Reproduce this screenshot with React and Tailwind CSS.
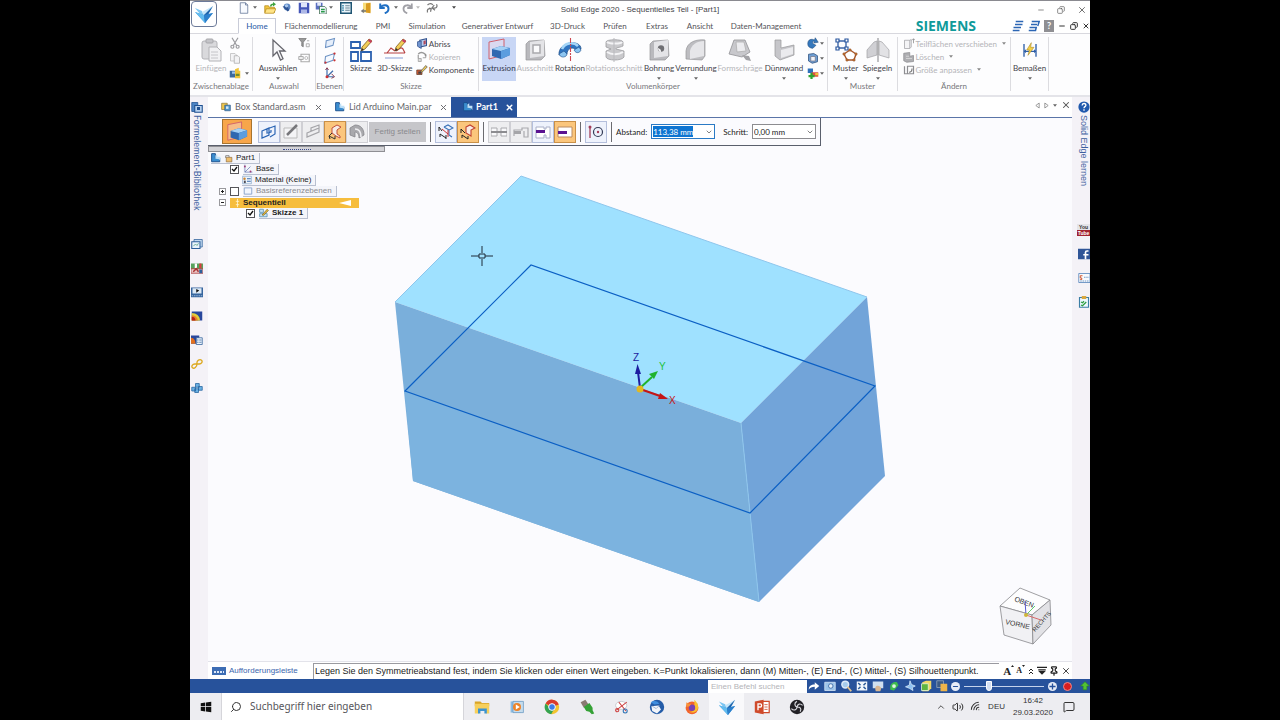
import { useState } from "react";
import { Search, X, Minus, Copy, ChevronDown, ChevronUp, Pin, Wifi, Volume2, MessageSquare } from "lucide-react";

/* ---------- icons ---------- */

function Svg({ box = "0 0 16 16", className = "w-3 h-3", children }) {
  return (
    <svg viewBox={box} className={`${className} shrink-0`} fill="none" aria-hidden="true">
      {children}
    </svg>
  );
}

function Caret({ color = "#666" }) {
  return (
    <Svg box="0 0 6 4" className="w-1 h-[3px]">
      <path d="M0 0h6L3 4z" fill={color} />
    </Svg>
  );
}

function SolidEdgeLogo({ className }) {
  return (
    <Svg box="0 0 20 20" className={className}>
      <path d="M1 4l7 3 2 5-4-2z" fill="#7cc6f2" />
      <path d="M8 8l11-6-3 6-6 4z" fill="#c4e5f8" />
      <path d="M1 8l9 3 9-2-8 10z" fill="#3f97dc" />
      <path d="M10 11l9-9-4 7-4 10z" fill="#1b62ab" />
      <path d="M1 8l9 3 1 8z" fill="#62bcef" />
      <path d="M10 11l9-2-8 10z" fill="#2c80cc" />
    </Svg>
  );
}

const NewDoc = () => (
  <Svg><path d="M3 1h7l3 3v11H3z" fill="#f7faff" stroke="#5b6f93" /><path d="M10 1v3h3" stroke="#5b6f93" /></Svg>
);
const OpenDoc = () => (
  <Svg>
    <path d="M1 5h5l1 2h7v7H1z" fill="#f3c63e" stroke="#b78b1c" />
    <path d="M3 9h13l-3 6H1z" fill="#ffe487" stroke="#b78b1c" />
    <path d="M8 6c0-3 2-4 4-4V0l4 3-4 3V4c-1 0-2 1-2 2z" fill="#3fa33f" />
  </Svg>
);
const Ball = () => (
  <Svg className="w-[9px] h-[9px]"><circle cx="9" cy="7" r="6" fill="#5b86c4" /><path d="M1 6l8-1 4 8-3 2z" fill="#2c5293" /><circle cx="8" cy="5" r="3" fill="#a9c8ee" /></Svg>
);
const Save = () => (
  <Svg><path d="M1 1h13l1 1v13H1z" fill="#4556b8" /><path d="M4 1h8v6H4z" fill="#dfe5fa" /><path d="M4 10h8v5H4z" fill="#aeb8e6" /></Svg>
);
const SaveAll = () => (
  <Svg>
    <path d="M1 1h9v9H1z" fill="#5a6fc0" /><path d="M3 1h5v4H3z" fill="#e5eafb" />
    <path d="M6 6h7l2 2v8H6z" fill="#f4f8ff" stroke="#3d6b4d" /><path d="M8 10h5M8 13h5" stroke="#2a9a49" strokeWidth="2" />
  </Svg>
);
const ListIcon = () => (
  <Svg>
    <path d="M1 1h14v14H1z" fill="#eaf5fb" stroke="#1f5573" strokeWidth="2" />
    <path d="M3 5h2M3 8h2M3 11h2" stroke="#2b7fa3" strokeWidth="2" /><path d="M7 5h6M7 8h6M7 11h6" stroke="#3b5d70" />
  </Svg>
);
const Door = () => (
  <Svg><path d="M4 1h10v13H4z" fill="#f8dd7a" /><path d="M8 2l6-1v14l-6-1z" fill="#d99b20" /><path d="M1 12l4-3v2h3v2H5v2z" fill="#777" /></Svg>
);
const Undo = ({ color = "#1f6fc4" }) => (
  <Svg><path d="M3 2v6h6" stroke={color} strokeWidth="2.6" /><path d="M3 8c3-5 11-5 11 1 0 3-2 5-5 6" stroke={color} strokeWidth="2.6" /></Svg>
);
const Redo = () => (
  <Svg><path d="M13 2v6H7" stroke="#a0a0a6" strokeWidth="2.4" /><path d="M13 8C10 3 2 3 2 9c0 3 2 5 5 6" stroke="#a0a0a6" strokeWidth="2.4" /></Svg>
);
const Pieces = () => (
  <Svg>
    <path d="M14 3c2 4-1 6-5 5M11 4L8 8l4 3" stroke="#777" strokeWidth="1.6" />
    <path d="M2 4c3-3 6-2 7 0M2 14c-1-4 1-6 5-5M4 8l3 1-1 4" stroke="#777" strokeWidth="1.6" />
  </Svg>
);

const Paste = () => (
  <Svg box="0 0 24 24" className="w-6 h-6">
    <rect x="3" y="3" width="15" height="18" rx="2" fill="#d9d9dc" stroke="#b2b2b6" />
    <rect x="7" y="1" width="7" height="4" rx="1" fill="#c4c4c8" stroke="#a7a7ab" />
    <path d="M10 9h8l4 4v10H10z" fill="#f1f1f3" stroke="#b2b2b6" />
    <path d="M12 14h7M12 17h7M12 20h7" stroke="#c4c4c8" />
  </Svg>
);
const Cut = () => (
  <Svg><path d="M4 1l6 10M12 1L6 11" stroke="#9a9a9e" strokeWidth="1.6" /><circle cx="4.500" cy="13" r="2" stroke="#9a9a9e" strokeWidth="1.6" /><circle cx="11.500" cy="13" r="2" stroke="#9a9a9e" strokeWidth="1.6" /></Svg>
);
const CopyPages = () => (
  <Svg><path d="M2 2h6l2 2v8H2z" fill="#f3f3f5" stroke="#bbb" /><path d="M7 5h5l2 2v8H7z" fill="#f3f3f5" stroke="#aaa" /></Svg>
);
const Palette = () => (
  <Svg><path d="M1 5h9v9H1z" fill="#3c6a9e" /><path d="M4 6h4v3H4z" fill="#9fc3e8" /><path d="M8 3l5-2v4h2v10H8z" fill="#f0c437" /><path d="M9 9h5v3H9z" fill="#6f8c2f" /></Svg>
);
const Cursor = () => (
  <Svg box="0 0 24 24" className="w-6 h-6"><path d="M7 2v16l4-4 3.500 8 2.500-1.200L13.500 13H19z" fill="#f8f8fa" stroke="#66666d" strokeWidth="1.300" /></Svg>
);
const Filter = () => (
  <Svg><path d="M1 2h10L7 7v6l-2-1V7z" fill="#999" stroke="#777" /><path d="M12 5h3M11 9h4v4h-4z" stroke="#999" /></Svg>
);
const SelectBox = () => (
  <Svg><path d="M4 3h11v10H4z" stroke="#aaa" strokeWidth="1.500" /><path d="M1 6h6v4H1z" fill="#eee" stroke="#999" /><circle cx="11" cy="8" r="2" stroke="#aaa" /></Svg>
);
const PlaneA = () => (
  <Svg><path d="M3 5l11-3-2 9-10 3z" fill="#e6effb" stroke="#6d93c4" strokeWidth="1.400" /></Svg>
);
const PlaneB = () => (
  <Svg><path d="M2 6l12-4-2 9-11 4z" fill="#f7faff" stroke="#6d93c4" strokeWidth="1.400" /><circle cx="14" cy="2" r="1.500" fill="#c33" /><circle cx="14" cy="11" r="1.500" fill="#c33" /><circle cx="2" cy="14" r="1.500" fill="#c33" /></Svg>
);
const Axes = () => (
  <Svg><path d="M4 2v11h9M4 13l8-8" stroke="#3f6fae" strokeWidth="1.600" /><circle cx="4" cy="13" r="2" fill="#c33" /><path d="M10 9l4 4-4 2M2 4l2-3 2 3" stroke="#8a3c50" strokeWidth="1.300" /></Svg>
);
const Pencil = () => (
  <g>
    <path d="M12 13l1-4 7-8 3 2-7 8z" fill="#f2cd57" stroke="#7c5a1c" strokeWidth=".8" />
    <path d="M20 1l3 2-1 2-3-2z" fill="#c83c62" /><path d="M12 13l1-3 2 2z" fill="#333" />
  </g>
);
const Sketch = () => (
  <Svg box="0 0 24 24" className="w-6 h-6">
    <path d="M2 4h9v6H2zM2 14h7v9H2zM12 14h10v9H12z" fill="#fff" stroke="#2c61b0" strokeWidth="1.800" /><Pencil />
  </Svg>
);
const Sketch3d = () => (
  <Svg box="0 0 24 24" className="w-6 h-6">
    <path d="M2 20h18" stroke="#a8b8e0" strokeWidth="1.400" />
    <path d="M1 15h21M4 15l4-5 4 3M13 13c4-3 5-4 7-2l2 4" stroke="#b84040" strokeWidth="1.200" /><Pencil />
  </Svg>
);
const Tear = () => (
  <Svg><path d="M5 3l9-2v9l-9 2z" fill="#b6cdf0" stroke="#35548f" strokeWidth="1.400" /><path d="M2 5l5-1v10l-5-3z" fill="#6f94cf" stroke="#35548f" /><path d="M10 4l3-1v5l-3 1z" fill="#b04a5c" /></Svg>
);
const CopyGray = () => (
  <Svg><path d="M3 4c4-4 10-1 10 3" stroke="#999" strokeWidth="2" /><path d="M13 4v5H9" stroke="#888" /><path d="M3 5v5h4v4H3z" fill="#ddd" stroke="#999" /></Svg>
);
const Component = () => (
  <Svg><path d="M1 8h7v6H1z" fill="#d55a36" stroke="#61402e" /><path d="M6 10l7-8 2 2-7 7z" fill="#f2cd57" stroke="#555" /><path d="M3 10h4v3H3z" fill="#444" /></Svg>
);

const Extrude = ({ className = "w-6 h-6" }) => (
  <Svg box="0 0 24 24" className={className}>
    <path d="M2 4l15-3v16L2 21z" fill="#f4dfe6" fillOpacity=".4" stroke="#d0606c" strokeWidth="1" />
    <path d="M5 11l9-3 9 2v7l-9 4-9-3z" fill="#2f68b0" /><path d="M5 11l9-3 9 2-9 3z" fill="#a4d1f6" />
    <path d="M14 13l9-3v7l-9 4z" fill="#5b9ddf" />
  </Svg>
);
const BlockShell = ({ children }) => (
  <Svg box="0 0 24 24" className="w-6 h-6">
    <path d="M3 6l3-3 15-1 1 16-4 4H3z" fill="#b9b9bd" stroke="#96969a" strokeWidth=".7" />
    <path d="M7 4l14-2v16l-14 2z" fill="#e4e4e7" />
    {children}
  </Svg>
);
const Cutout = () => <BlockShell><path d="M10 7h7v8h-7z" fill="#fbfbfc" stroke="#a9a9ad" strokeWidth="1.500" /></BlockShell>;
const Hole = () => <BlockShell><circle cx="14" cy="10.500" r="3.200" fill="#6f6f73" /><path d="M11 10c2 1 3 1 3 4-2 0-3-2-3-4z" fill="#f4f4f6" /></BlockShell>;
const Revolve = () => (
  <Svg box="0 0 24 24" className="w-6 h-6">
    <path d="M1 17C0 3 23 1 23 11l-5 3c0-6-9-5-9 2z" fill="#2f74c0" stroke="#1d4f8c" strokeWidth=".8" />
    <path d="M4 11C7 4 16 4 20 8" stroke="#a4d5f7" strokeWidth="2.600" /><path d="M1 16l5-3 3 3c0 3-6 5-8 0zM16 12l5-3 2 3c-1 3-5 4-7 0z" fill="#8cc5f1" stroke="#1d4f8c" strokeWidth=".6" />
    <path d="M12.500 0v24" stroke="#cf4650" strokeWidth="1.100" strokeDasharray="5 1 2 1" />
  </Svg>
);
const RevolveCut = () => (
  <Svg box="0 0 24 24" className="w-6 h-6">
    <path d="M4 4c0-3 17-3 17 0v4c-4 2-7 1-7 3l8 2v6c-2 4-17 4-18 0v-6l5-2-5-2z" fill="#c9c9cc" stroke="#9c9ca0" strokeWidth=".8" />
    <path d="M5 4c2 2 14 2 15 0M5 14c4 3 12 3 16 0" stroke="#f4f4f6" strokeWidth="2" /><path d="M12 0v24" stroke="#b9b9bd" />
  </Svg>
);
const Round = () => (
  <Svg box="0 0 24 24" className="w-6 h-6">
    <path d="M2 21V13C3 4 12 1 21 2v16l-3 4z" fill="#bdbdc1" stroke="#96969a" strokeWidth=".7" /><path d="M6 21v-8c1-6 7-10 14-10v15z" fill="#e6e6e9" />
  </Svg>
);
const Draft = () => (
  <Svg box="0 0 24 24" className="w-6 h-6">
    <path d="M6 2h11l5 12-8 5-13-3z" fill="#c8c8cc" stroke="#929296" strokeWidth=".8" /><path d="M8 4h8l2 9-9 1z" fill="#ececef" stroke="#aaa" strokeWidth=".7" />
    <path d="M14 17l7 1 2 5-5-1z" fill="#a3a3a7" />
  </Svg>
);
const ThinWall = () => (
  <Svg box="0 0 24 24" className="w-6 h-6">
    <path d="M3 2h6v8l13-3v10L8 22l-5-4z" fill="#c6c6ca" stroke="#96969a" strokeWidth=".7" /><path d="M9 12l12-3v7L9 20z" fill="#ebebee" />
  </Svg>
);
const MiniSweep = () => <Svg><path d="M1 9c0-6 5-7 9-5l1-3 4 6-6 1 1-2c-2-1-3 0-2 3l4 2-4 4c-4 0-7-2-7-6z" fill="#3578bd" stroke="#1e4978" strokeWidth=".7" /></Svg>;
const MiniHelix = () => <Svg><path d="M2 3l7-1 5 3v8l-7 2-5-3z" fill="#6f9fd4" stroke="#2c4f7c" /><path d="M5 6h6v6H5z" fill="#f3f5fa" stroke="#778" /></Svg>;
const MiniAdd = () => <Svg><path d="M1 2h7v6H1z" fill="#2f71bb" /><path d="M6 7h9v6H6z" fill="#d9543e" /><path d="M6 8v8M2 12h8" stroke="#2da331" strokeWidth="3" /><path d="M11 8h4v3h-4z" fill="#f1c23c" /></Svg>;
const Pattern = () => (
  <Svg box="0 0 24 24" className="w-6 h-6">
    <path d="M4 3h8v7H4z" stroke="#3d66a8" strokeWidth="1.400" />
    <path d="M2 1h3v3H2zM11 1h3v3h-3zM2 9h3v3H2zM11 9h3v3h-3z" fill="#fff" stroke="#2a579e" strokeWidth="1.200" />
    <path d="M16 12l6 4-2 6h-7l-3-6z" fill="#fff" stroke="#a8572b" strokeWidth="1.400" />
    <path d="M15 11h2v2h-2zM21 15h2v2h-2zM19 21h2v2h-2zM12 21h2v2h-2zM9 15h2v2H9z" fill="#d7853c" stroke="#8f4a20" strokeWidth=".6" />
  </Svg>
);
const Mirror = () => (
  <Svg box="0 0 24 24" className="w-6 h-6">
    <path d="M1 20v-8l7-8 3-1v14z" fill="#d0d0d4" stroke="#a1a1a5" strokeWidth=".7" /><path d="M23 20v-8l-7-8-3-1v14z" fill="#e2e2e5" stroke="#a1a1a5" strokeWidth=".7" />
    <path d="M12 0v24" stroke="#8c8c90" strokeWidth="1.100" />
  </Svg>
);
const MoveFace = () => <Svg><path d="M2 3h7v11H2zM9 3l2-1v10l-2 2" fill="#f4f4f6" stroke="#a2a2a6" /><path d="M14 7V1M12 3l2-2 2 2" stroke="#888" /></Svg>;
const DeleteFace = () => <Svg><path d="M1 3l8-1v5l5-1v8l-9 1-4-2z" fill="#aeaeb2" stroke="#8d8d91" /><path d="M4 7h4M4 10h8" stroke="#ddd" /></Svg>;
const ResizeFace = () => <Svg><path d="M2 3v10h4M6 3h8v10H6z" stroke="#8d8d91" strokeWidth="1.600" /><path d="M8 11c3 0 4-2 4-5" stroke="#777" strokeWidth="1.500" /></Svg>;
const Dimension = () => (
  <Svg box="0 0 24 24" className="w-4 h-4">
    <path d="M3 3v19M21 3v19M3 14h18" stroke="#2d5ea8" strokeWidth="2" /><path d="M6 11l-3 3 3 3M18 11l3 3-3 3" fill="#2d5ea8" /><path d="M14 1L7 12h4l-2 8 9-12h-5z" fill="#f3cf47" stroke="#a3831d" strokeWidth=".8" />
  </Svg>
);

const PartIcon = () => <Svg className="w-[10px] h-[10px]"><path d="M1 1h6v7h7v6H1z" fill="#3b8ed0" stroke="#1b4f8e" strokeWidth="1.500" /><path d="M7 4l3-2v4h5v7l-2-3-6-1z" fill="#bde0f8" /></Svg>;
const AsmIcon = () => <Svg className="w-[10px] h-[10px]"><path d="M1 2h9v10H1z" fill="#efc64b" stroke="#7d692c" /><path d="M6 5h9v9H6z" fill="#4e93c9" stroke="#2b5584" /><path d="M8 7h4v4H8z" fill="#d3e8f7" /></Svg>;

/* command bar */
const Frames = () => <Svg className="w-4 h-4"><path d="M1 7l7-3v7l-7 3zM6 5l8-3v8l-5 3M6 5v4l4-1V6" stroke="#2a64b4" strokeWidth="1.200" /></Svg>;
const DrawLine = () => <Svg className="w-4 h-4"><path d="M1 4h13v10H1z" fill="#f4f4f6" stroke="#bbb" /><path d="M4 11L14 1" stroke="#77777b" strokeWidth="2.500" /></Svg>;
const Steps = () => <Svg className="w-4 h-4"><path d="M2 9l12-5v4L2 13zM6 7V4l8-3v3" stroke="#a5a5a9" strokeWidth="1.200" /></Svg>;
const Symmetric = () => <Svg className="w-4 h-4"><path d="M5 4l5-3 4 2-4 3v4l3 2v2l-4-2-4-3z" fill="#f8ebe4" stroke="#c0503f" /><path d="M2 12l6 3M5 9l-3 3 1 3M8 12v3" stroke="#333" /></Svg>;
const HalfTube = () => <Svg className="w-4 h-4"><path d="M1 4l5-3c6 0 9 4 9 10l-5 3c0-4-2-6-4-6v5l-5-2z" fill="#a9a9ad" stroke="#85858a" strokeWidth=".8" /><path d="M6 5c5 0 6 4 6 8" stroke="#ededf0" strokeWidth="1.600" /></Svg>;
const SideA = () => <Svg className="w-4 h-4"><path d="M6 3l4-2 5 3-4 2v5l3 2M6 3l5 3" stroke="#3b73b8" strokeWidth="1.100" /><path d="M10 6v7M4 5l6 5" stroke="#c33" /><path d="M1 3l3 4M1 3v4M2 10l6 4M8 11v4M2 10v3" stroke="#222" /></Svg>;
const SideB = () => <Svg className="w-4 h-4"><path d="M6 3l4-2 5 3-4 2v6l-5-3z" fill="#f8ebe4" stroke="#c0402f" strokeWidth="1.100" /><path d="M1 5l4 4M1 5v4M2 11l6 4M8 12v3M2 11v3" stroke="#222" /></Svg>;
const SlotA = () => <Svg className="w-4 h-4"><path d="M0 4h6v8H0zM10 4h6v8h-6z" fill="#f9f9fb" stroke="#aaaaae" /><path d="M0 7h16v2H0z" fill="#8c8c90" /></Svg>;
const SlotB = () => <Svg className="w-4 h-4"><path d="M1 12V6h8V4h6v9h-4V7" stroke="#aaaaae" strokeWidth="1.200" /><path d="M1 7h7v3H1z" fill="#a5a5a9" /></Svg>;
const SlotC = () => <Svg className="w-4 h-4"><path d="M1 3h8v2h2V3h4v11h-4v-3H9v3H1z" fill="#fff" stroke="#aab0c8" /><path d="M1 6h9v3H1z" fill="#5b1391" /></Svg>;
const SlotD = () => <Svg className="w-4 h-4"><path d="M1 3h14v10H1z" fill="#fff" stroke="#bb8c62" /><path d="M1 7h9v3H1z" fill="#5b1391" /></Svg>;
const PointTarget = () => <Svg className="w-4 h-4"><path d="M2 4v10" stroke="#a33c58" strokeWidth="1.300" /><circle cx="2" cy="3" r="1.500" fill="#a33c58" /><circle cx="10" cy="8" r="4.500" stroke="#333a55" strokeWidth="1.200" /><circle cx="10" cy="8" r="1.200" fill="#a33c58" /></Svg>;

/* side panels */
const Gallery = () => <Svg><path d="M4 2h11v10H4z" fill="#c3daf0" stroke="#2d5f9a" /><path d="M1 5h11v9H1z" fill="#e9f3fb" stroke="#2d5f9a" strokeWidth="1.400" /><path d="M3 11l3-3 2 2 2-3" stroke="#4a9a7b" /></Svg>;
const Parts = () => <Svg><path d="M0 2h16v8H0z" fill="#58a25c" /><path d="M5 2h3v6H5z" fill="#fff" /><path d="M11 2h3v6h-3z" fill="#d83d3d" /><path d="M0 9h16v6H0z" fill="#ecc9c9" stroke="#a33" /><path d="M3 13l4-4 3 4" stroke="#a33" strokeWidth="2" /><path d="M11 10h4v5h-4z" fill="#2d5f9a" /></Svg>;
const Player = () => <Svg><path d="M0 2h16v13H0z" fill="#36659e" /><path d="M2 3h12v7H2z" fill="#dce9f5" /><path d="M7 4l4 2-4 3z" fill="#111" /><path d="M1 13h14" stroke="#b5cdea" strokeDasharray="2 1" /></Svg>;
const Heat = () => <Svg><path d="M1 2h14v12H1z" fill="#28479c" /><path d="M1 4c6 0 11 4 11 10H1z" fill="#e2cf3b" /><path d="M1 7c4 0 8 3 8 7H1z" fill="#e8842a" /><path d="M1 9c3 0 5 2 5 5H1z" fill="#b5201a" /></Svg>;
const HeatTable = () => <Svg><path d="M0 2h11v11H0z" fill="#28479c" /><path d="M0 5c4 0 6 4 6 8H0z" fill="#e2701f" /><path d="M7 5h8v9H7z" fill="#eef4fc" stroke="#2d5f9a" /><path d="M8 8h2M8 11h2M11 8h3M11 11h3" stroke="#36659e" /></Svg>;
const Chain = () => <Svg><path d="M8 8c-1-5 4-7 6-5s0 5-3 5H5c-3 0-5 3-3 5s6-1 6-5z" stroke="#dda91f" strokeWidth="1.700" /></Svg>;
const Cubes = () => <Svg><path d="M6 2h5v5H6zM1 7h5v5H1zM10 6h5v5h-5zM5 9h5v5H5z" fill="#69b0e2" stroke="#23639f" /></Svg>;
const LibraryIcon = () => <Svg><path d="M1 2h8v12H1z" fill="#4c84c4" stroke="#1e4f90" /><path d="M5 6h10v9H5z" fill="#b7d1ef" stroke="#1e4f90" strokeWidth="1.400" /><path d="M8 8h4v4H8z" fill="#1e4f90" /></Svg>;
const Help = () => <Svg><circle cx="8" cy="8" r="7.500" fill="#1f58ad" /><path d="M5.500 6c0-3.500 5-3.500 5-.5 0 2-2.500 2-2.500 4M8 11v2" stroke="#fff" strokeWidth="1.800" /></Svg>;
const YouTube = () => (
  <span className="w-[13px] flex flex-col text-center text-[5px] leading-[6px] font-bold">
    <span className="text-[#333] bg-[#e4e4e8]">You</span>
    <span className="bg-[#a2222f] text-white">Tube</span>
  </span>
);
const Facebook = () => <Svg><path d="M0 1h16v14H0z" fill="#2f5597" /><path d="M14 4h-2c-2 0-2 1-2 2v9M7 9h7" stroke="#fff" strokeWidth="2.200" /></Svg>;
const Card = () => <Svg><path d="M1 2h15v12H1z" fill="#f8fafd" stroke="#4a7bb5" /><path d="M6 5H3v3h2v2H3" stroke="#d0532c" strokeWidth="1.300" /><path d="M8 7h7M3 12h12" stroke="#4a7bb5" strokeDasharray="2 1" /></Svg>;
const Clipboard = () => <Svg><path d="M2 2h12v13H2z" fill="#eef8ff" stroke="#3b7ea5" strokeWidth="1.500" /><path d="M5 0h6v4H5z" fill="#d9a840" /><path d="M4 8l2 1 2-2M4 12l2 1 5-5" stroke="#2c9d40" strokeWidth="1.700" /></Svg>;

/* ---------- building blocks ---------- */

function Group({ label, className, children }) {
  return (
    <section className={`${className} shrink-0 flex flex-col border-r border-[#dcdce0]`}>
      <div className="flex h-[45px] justify-center">{children}</div>
      <h2 className="text-center text-[8px] leading-[10px] text-[#77777b] whitespace-nowrap">{label}</h2>
    </section>
  );
}

function BigButton({ icon, label, width, off, on, caret }) {
  return (
    <button
      disabled={off}
      className={`${width} shrink-0 h-11 flex flex-col items-center text-[8px] leading-[10px] whitespace-nowrap ${
        on ? "bg-[#c8d6f5] text-[#33364a]" : off ? "text-[#b4b4b8]" : "text-[#44444a]"
      }`}
    >
      <span className="h-[26px] flex items-center">{icon}</span>
      <span>{label}</span>
      {caret && <span className="mt-1"><Caret /></span>}
    </button>
  );
}

function TextButton({ icon, label, off, caret }) {
  return (
    <button disabled={off} className={`flex items-center gap-px h-[13px] text-[8px] whitespace-nowrap ${off ? "text-[#b4b4b8]" : "text-[#44444a]"}`}>
      {icon}
      {label}
      {caret && <span className="ml-1"><Caret color="#888" /></span>}
    </button>
  );
}

function IconButton({ label, className = "", children }) {
  return (
    <button aria-label={label} className={`flex items-center justify-center ${className}`}>
      {children}
    </button>
  );
}

function BarButton({ label, tone = "plain", children }) {
  const tones = {
    plain: "bg-[#eeeef0] border-[#cfcfd4]",
    blue: "bg-[#eef2fc] border-[#b4bfdc]",
    hot: "bg-[#fbc67c] border-[#c99048]",
  };
  return (
    <button aria-label={label} className={`w-[22px] h-[22px] border flex items-center justify-center ${tones[tone]}`}>
      {children}
    </button>
  );
}

function Combo({ id, label, value, selected }) {
  const [text, setText] = useState(value);
  return (
    <div className="flex items-center gap-1">
      <label htmlFor={id} className="text-[8px] text-[#222]">{label}</label>
      <div className={`flex items-center justify-between w-16 h-[15px] bg-white border px-px ${selected ? "border-[#2a7ac5]" : "border-[#8c8c90]"}`}>
        <input
          id={id}
          value={text}
          onChange={(e) => setText(e.target.value)}
          className={`w-10 h-[11px] text-[8px] outline-none ${selected ? "bg-[#0d74d1] text-white" : "text-[#222]"}`}
        />
        <button aria-label={`${label} Liste`}><ChevronDown className="w-2 h-2 text-[#444]" /></button>
      </div>
    </div>
  );
}

function TreeTag({ children, className = "" }) {
  return (
    <span className={`flex items-center gap-[3px] h-[11px] pr-1 border-b border-r border-[#b9c0d0] bg-[#f4f5fa] ${className}`}>{children}</span>
  );
}

function Check({ label, on = false }) {
  const [checked, setChecked] = useState(on);
  return (
    <label className="relative flex w-[9px] h-[9px] mr-1">
      <input
        type="checkbox"
        aria-label={label}
        checked={checked}
        onChange={() => setChecked(!checked)}
        className="appearance-none w-[9px] h-[9px] border border-[#55555a] bg-white"
      />
      {checked && (
        <svg viewBox="0 0 9 9" className="absolute inset-0 pointer-events-none" fill="none">
          <path d="M2 4l2 2 3-4" stroke="#111" strokeWidth="1.300" />
        </svg>
      )}
    </label>
  );
}

function Expander({ open }) {
  return (
    <button aria-label={open ? "Zuklappen" : "Aufklappen"} className="w-[7px] h-[7px] border border-[#99999d] bg-white">
      <svg viewBox="0 0 5 5" className="w-full h-full"><path d={open ? "M1 2.500h3" : "M1 2.500h3M2.500 1v3"} stroke="#222" /></svg>
    </button>
  );
}

/* ---------- sections ---------- */

const TABS = [
  ["Home", "w-[38px]"],
  ["Flächenmodellierung", "w-[90px]"],
  ["PMI", "w-[34px]"],
  ["Simulation", "w-[54px]"],
  ["Generativer Entwurf", "w-[87px]"],
  ["3D-Druck", "w-[53px]"],
  ["Prüfen", "w-[42px]"],
  ["Extras", "w-[42px]"],
  ["Ansicht", "w-[44px]"],
  ["Daten-Management", "w-[88px]"],
];

function Header() {
  return (
    <header className="flex bg-white border-t border-[#8a8a90]">
      <div className="w-12 shrink-0 border-b border-[#d8d8de] pl-px">
        <button aria-label="Anwendungsmenü" className="w-[26px] h-[26px] border border-[#6c7a99] rounded-sm flex items-center justify-center bg-white">
          <SolidEdgeLogo className="w-5 h-5" />
        </button>
      </div>
      <div className="flex-1 min-w-0">
        <div className="grid grid-cols-[1fr_auto_1fr] items-center h-[17px] -ml-12 pl-12">
          <div className="flex items-center h-[17px] pb-[4px]">
            <IconButton label="Neu" className="w-3"><NewDoc /></IconButton>
            <IconButton label="Neu Optionen" className="w-2.5"><Caret /></IconButton>
            <IconButton label="Öffnen" className="w-5"><OpenDoc /></IconButton>
            <IconButton label="Modell" className="w-3"><Ball /></IconButton>
            <IconButton label="Speichern" className="w-6"><Save /></IconButton>
            <IconButton label="Alles speichern" className="w-2.5"><SaveAll /></IconButton>
            <IconButton label="Speicheroptionen" className="w-2.5"><Caret /></IconButton>
            <IconButton label="Eigenschaften" className="w-5"><ListIcon /></IconButton>
            <IconButton label="Schließen" className="w-5"><Door /></IconButton>
            <IconButton label="Rückgängig" className="w-4"><Undo /></IconButton>
            <IconButton label="Rückgängig Liste" className="w-2"><Caret /></IconButton>
            <IconButton label="Wiederholen" className="w-4"><Redo /></IconButton>
            <IconButton label="Wiederholen Liste" className="w-1"><Caret color="#bbb" /></IconButton>
            <IconButton label="Wechseln" className="w-6"><Pieces /></IconButton>
            <IconButton label="Anpassen" className="w-5"><Caret color="#444" /></IconButton>
          </div>
          <h1 className="text-[8px] text-[#44444a] whitespace-nowrap -ml-12">Solid Edge 2020 - Sequentielles Teil - [Part1]</h1>
          <div className="flex justify-end gap-3 pr-[3px] text-[#555]">
            <IconButton label="Minimieren"><Minus className="w-2 h-2" /></IconButton>
            <IconButton label="Verkleinern"><Copy className="w-2 h-2 -scale-x-100" /></IconButton>
            <IconButton label="Beenden"><X className="w-2.5 h-2.5" /></IconButton>
          </div>
        </div>
        <nav className="flex h-4 items-stretch font-[Lato,sans-serif] text-[8px] text-[#55555a]">
          {TABS.map(([name, width], i) => (
            <button
              key={name}
              className={`${width} shrink-0 whitespace-nowrap border-b ${
                i === 0 ? "border-t border-x border-[#c9ccd8] border-b-white text-[#2858a4]" : "border-[#d8d8de]"
              }`}
            >
              {name}
            </button>
          ))}
          <div className="flex-1 flex items-center justify-end border-b border-[#d8d8de]">
            <span className="font-['Open_Sans',sans-serif] font-bold text-[14px] leading-4 text-[#0f9a9a] mr-9">SIEMENS</span>
            <div className="flex items-center gap-1 text-[#333]">
              <IconButton label="Fenster 1"><Svg><path d="M5 2h10M4 6h10M2 10h10M1 14h9" stroke="#2c66b4" strokeWidth="2" /></Svg></IconButton>
              <IconButton label="Fenster 2"><Svg><path d="M5 2h10l-2 6M4 6h8M2 10h9l-1 4H1" stroke="#2c66b4" strokeWidth="2" /></Svg></IconButton>
              <IconButton label="Hilfe" className="w-2.5 h-3 bg-[#8f8f93] text-white text-[9px] leading-3 font-bold">?</IconButton>
              <IconButton label="Dokument minimieren"><Minus className="w-2 h-2" strokeWidth={3} /></IconButton>
              <IconButton label="Dokument verkleinern"><Copy className="w-2 h-2 -scale-x-100" strokeWidth={3} /></IconButton>
              <IconButton label="Dokument schließen"><X className="w-2 h-2" strokeWidth={3} /></IconButton>
            </div>
          </div>
        </nav>
      </div>
    </header>
  );
}

function Ribbon() {
  return (
    <div className="flex h-[63px] bg-[#fdfdfe] pt-[3px] pb-1 border-b-2 border-[#e4e4e9] font-[Lato,sans-serif] overflow-hidden">
      <Group label="Zwischenablage" className="w-[63px]">
        <BigButton icon={<Paste />} label="Einfügen" width="w-9" off />
        <div className="flex flex-col items-start gap-[3px]">
          <IconButton label="Ausschneiden"><Cut /></IconButton>
          <IconButton label="Kopieren"><CopyPages /></IconButton>
          <IconButton label="Format" className="gap-1"><Palette /><Caret /></IconButton>
        </div>
      </Group>
      <Group label="Auswahl" className="w-[63px]">
        <BigButton icon={<Cursor />} label="Auswählen" width="w-10" caret />
        <div className="flex flex-col gap-[3px]">
          <IconButton label="Filter"><Filter /></IconButton>
          <IconButton label="Auswahlrahmen"><SelectBox /></IconButton>
        </div>
      </Group>
      <Group label="Ebenen" className="w-7">
        <div className="flex flex-col gap-[3px]">
          <IconButton label="Parallele Ebene"><PlaneA /></IconButton>
          <IconButton label="Ebene durch Punkte"><PlaneB /></IconButton>
          <IconButton label="Koordinatensystem"><Axes /></IconButton>
        </div>
      </Group>
      <Group label="Skizze" className="w-[135px]">
        <BigButton icon={<Sketch />} label="Skizze" width="w-8" />
        <BigButton icon={<Sketch3d />} label="3D-Skizze" width="w-9" />
        <div className="flex flex-col pl-[3px] pr-[3px]">
          <TextButton icon={<Tear />} label="Abriss" />
          <TextButton icon={<CopyGray />} label="Kopieren" off />
          <TextButton icon={<Component />} label="Komponente" />
        </div>
      </Group>
      <Group label="Volumenkörper" className="w-[349px]">
        <BigButton icon={<Extrude />} label="Extrusion" width="w-[34px]" on />
        <BigButton icon={<Cutout />} label="Ausschnitt" width="w-[38px]" off />
        <BigButton icon={<Revolve />} label="Rotation" width="w-8" />
        <BigButton icon={<RevolveCut />} label="Rotationsschnitt" width="w-14" off />
        <BigButton icon={<Hole />} label="Bohrung" width="w-[34px]" caret />
        <BigButton icon={<Round />} label="Verrundung" width="w-10" caret />
        <BigButton icon={<Draft />} label="Formschräge" width="w-12" off />
        <BigButton icon={<ThinWall />} label="Dünnwand" width="w-10" caret />
        <div className="flex flex-col gap-[3px] pl-[3px]">
          <IconButton label="Austragen" className="gap-px"><MiniSweep /><Caret /></IconButton>
          <IconButton label="Helix" className="gap-px"><MiniHelix /><Caret /></IconButton>
          <IconButton label="Hinzufügen" className="gap-px"><MiniAdd /><Caret /></IconButton>
        </div>
      </Group>
      <Group label="Muster" className="w-[70px]">
        <BigButton icon={<Pattern />} label="Muster" width="w-[30px]" caret />
        <BigButton icon={<Mirror />} label="Spiegeln" width="w-[34px]" caret />
      </Group>
      <Group label="Ändern" className="w-[113px]">
        <div className="flex flex-col w-[103px]">
          <TextButton icon={<MoveFace />} label="Teilflächen verschieben" off caret />
          <TextButton icon={<DeleteFace />} label="Löschen" off caret />
          <TextButton icon={<ResizeFace />} label="Größe anpassen" off caret />
        </div>
      </Group>
      <Group label="" className="w-[38px]">
        <BigButton icon={<Dimension />} label="Bemaßen" width="w-9" caret />
      </Group>
    </div>
  );
}

function DocTabs() {
  const close = <X className="w-[9px] h-[9px]" strokeWidth={2.5} />;
  return (
    <div className="flex h-[21px] bg-white border-b border-[#5a75a8] text-[9px] text-[#66666b] font-[Lato,sans-serif]">
      <div className="w-[119px] pl-[13px] pr-1 flex items-center gap-1">
        <AsmIcon /><button className="flex-1 text-left whitespace-nowrap">Box Standard.asm</button>
        <button aria-label="Box Standard.asm schließen">{close}</button>
      </div>
      <div className="w-[124px] pl-2 pr-[3px] flex items-center gap-1">
        <PartIcon /><button className="flex-1 text-left whitespace-nowrap">Lid Arduino Main.par</button>
        <button aria-label="Lid Arduino Main.par schließen">{close}</button>
      </div>
      <div className="w-[66px] pl-3 pr-[3px] flex items-center gap-[3px] bg-[#27529b] text-white">
        <PartIcon /><button className="flex-1 text-left font-bold">Part1</button>
        <button aria-label="Part1 schließen"><X className="w-[9px] h-[9px]" strokeWidth={4} /></button>
      </div>
      <div className="flex-1 flex items-center justify-end gap-1 pr-px pb-1 text-[#555]">
        <Svg box="0 0 6 8" className="w-[5px] h-[7px]"><path d="M5 1L1 4l4 3z" stroke="#888" /></Svg>
        <Svg box="0 0 6 8" className="w-[5px] h-[7px]"><path d="M1 1l4 3-4 3z" stroke="#888" /></Svg>
        <Caret />
        <button aria-label="Fenster schließen"><X className="w-2.5 h-2.5" strokeWidth={2.5} /></button>
      </div>
    </div>
  );
}

function CommandBar() {
  const sep = <span className="w-px h-5 bg-[#6b6b70]" />;
  return (
    <div className="flex items-center w-max h-7 pl-3.5 pr-1 gap-1 bg-[#fbfbfe] border-b border-r border-[#5a5f6c]">
      <button aria-label="Extrusion" className="w-[30px] h-[25px] mr-0.5 border border-[#a8742e] bg-[#f7a64a] flex items-center justify-center"><Extrude className="w-[22px] h-[22px]" /></button>
      <div className="flex">
        <BarButton label="Ebene" tone="blue"><Frames /></BarButton>
        <BarButton label="Zeichnen"><DrawLine /></BarButton>
        <BarButton label="Schritte"><Steps /></BarButton>
        <BarButton label="Abmaß" tone="hot"><Symmetric /></BarButton>
        <BarButton label="Behandlung"><HalfTube /></BarButton>
        <button disabled className="w-[57px] h-5 mt-px ml-px bg-[#c6c6ca] text-[8px] text-[#8a8a8e]">Fertig stellen</button>
      </div>
      {sep}
      <div className="flex">
        <BarButton label="Asymmetrisch" tone="blue"><SideA /></BarButton>
        <BarButton label="Symmetrisch" tone="hot"><SideB /></BarButton>
      </div>
      {sep}
      <div className="flex">
        <BarButton label="Alle durch"><SlotA /></BarButton>
        <BarButton label="Nächste"><SlotB /></BarButton>
        <BarButton label="Von bis" tone="blue"><SlotC /></BarButton>
        <BarButton label="Endliche Tiefe" tone="hot"><SlotD /></BarButton>
      </div>
      {sep}
      <BarButton label="Eigenpunkt" tone="blue"><PointTarget /></BarButton>
      {sep}
      <div className="flex gap-2 font-[Lato,sans-serif]">
        <Combo id="abstand" label="Abstand:" value="113,38 mm" selected />
        <Combo id="schritt" label="Schritt:" value="0,00 mm" />
      </div>
    </div>
  );
}

function PathFinder() {
  return (
    <div className="w-[177px] text-[8px] leading-[10px] text-[#222]">
      <div className="h-1.5 flex justify-center items-center bg-[#d3d3d7] border border-[#8f8f94]">
        <span className="w-7 border-t border-dotted border-[#3b4b8f]" />
      </div>
      <ul className="flex flex-col pt-px [&>li]:flex [&>li]:items-center [&>li]:h-[11px]">
        <li className="pl-[3px]"><TreeTag><PartIcon /><Svg className="w-[9px] h-[9px]"><path d="M3 7V3h6v3" stroke="#777" strokeWidth="1.500" /><path d="M4 6h10v8H4z" fill="#edbd6c" stroke="#7c5a2c" /></Svg>Part1</TreeTag></li>
        <li className="pl-[22px]"><Check label="Base" on /><TreeTag><Svg className="w-2.5 h-2.5"><path d="M3 1v12h12M3 13l9-9" stroke="#5168a8" /><circle cx="3" cy="4" r="1.500" fill="#a33c78" /><circle cx="12" cy="12" r="1.500" fill="#a33c78" /></Svg>Base</TreeTag></li>
        <li className="pl-[34px]"><TreeTag><Svg className="w-2.5 h-2.5"><path d="M1 2h14v12H1z" fill="#eef5fb" stroke="#7c9fc6" /><circle cx="4" cy="6" r="2" fill="#cb8533" /><path d="M3 9h3v4H3z" fill="#4b4b55" /><path d="M8 6h6M8 10h6" stroke="#2f62a8" strokeWidth="1.500" /></Svg>Material (Keine)</TreeTag></li>
        <li className="pl-[11px]"><Expander /><span className="w-1" /><Check label="Basisreferenzebenen" /><TreeTag className="text-[#8a8a90]"><Svg className="w-2.5 h-2.5"><path d="M2 3h12v10H2z" fill="#f2f6fd" stroke="#8ba4cc" strokeWidth="1.500" /></Svg>Basisreferenzebenen</TreeTag></li>
        <li className="pl-[11px]">
          <Expander open />
          <span className="flex items-center justify-between w-[129px] h-2.5 ml-1 pl-[5px] pr-2 bg-[#f6bd3d] font-bold">
            <span className="flex items-center gap-[3px]">
              <Svg box="0 0 6 10" className="w-[5px] h-2.5"><path d="M3 0v10M1 3h4M1 7h4" stroke="#fff3cc" /></Svg>
              Sequentiell
            </span>
            <Svg box="0 0 12 6" className="w-3 h-1.5"><path d="M12 0v6L0 3z" fill="#fff" /></Svg>
          </span>
        </li>
        <li className="pl-[38px]"><Check label="Skizze 1" on /><TreeTag className="font-bold"><Svg className="w-2.5 h-2.5"><path d="M1 2h6v5H1zM1 9h12v5H1z" fill="#c7e2f3" stroke="#357ca5" /><path d="M5 11l8-9 2 2-8 8z" fill="#e8bd3a" stroke="#6a551a" /></Svg>Skizze 1</TreeTag></li>
      </ul>
    </div>
  );
}

function Model() {
  return (
    <svg viewBox="208 118 864 543" className="absolute inset-0 w-full h-full" aria-label="Extrudierter Quader">
      <path d="M395 302L521 176 867 297 741 423z" fill="#9fe1ff" />
      <path d="M395 302L741 423 759 602 413 481z" fill="#7aafdb" />
      <path d="M741 423L867 297 885 476 759 602z" fill="#72a4d9" />
      <path d="M405 391L750 513 759 602 413 481z" fill="#7cb3df" />
      <path d="M395 302L521 176 867 297M741 423L759 602" stroke="#8fc6ec" fill="none" />
      <path d="M405 391L531 265 875 386 750 513z" stroke="#0b5fc4" strokeWidth="1.200" fill="none" />
      <path d="M471 256h8M485 256h8M482 246v7M482 259v7M479 254h6v4h-6z" stroke="#1d2b38" fill="none" />
      {/* triad */}
      <path d="M640 388L638 372" stroke="#1c1ca0" strokeWidth="2" />
      <path d="M637.500 364l3.500 10h-6z" fill="#1c1ca0" />
      <path d="M640 388l12-11" stroke="#20b32c" strokeWidth="2" />
      <path d="M658 371l-4 8-5-5z" fill="#20b32c" />
      <path d="M640 389l20 7" stroke="#c41616" strokeWidth="2" />
      <path d="M668 399l-10 0 2-6z" fill="#c41616" />
      <circle cx="640" cy="389" r="3.500" fill="#e2b921" />
      <g className="font-['Liberation_Sans',sans-serif] text-[10px]">
        <text x="633" y="361" fill="#1c1ca0">Z</text>
        <text x="659" y="370" fill="#20c23a">Y</text>
        <text x="669" y="404" fill="#c41616">X</text>
      </g>
      {/* view cube */}
      <path d="M1000 606L1020 588 1050 600 1032 615z" fill="#fdfdfe" stroke="#88888c" strokeWidth=".8" />
      <path d="M1000 606L1032 615 1033 644 1004 635z" fill="#f1f1f4" stroke="#88888c" strokeWidth=".8" />
      <path d="M1032 615L1050 600 1051 625 1033 644z" fill="#e2e2e6" stroke="#88888c" strokeWidth=".8" />
      <g className="font-['Liberation_Sans',sans-serif] text-[7px]" fill="#333">
        <text x="1014" y="601" transform="rotate(20 1014 601)">OBEN</text>
        <text x="1005" y="624" transform="rotate(12 1005 624)">VORNE</text>
        <text x="1035" y="632" transform="rotate(-48 1035 632)" className="text-[6px]">RECHTS</text>
      </g>
      <path d="M1026 615l-1-14" stroke="#5a5ad0" /><path d="M1026 615l9-9" stroke="#63cc6a" /><path d="M1026 615l15 5" stroke="#d96a6a" />
      <circle cx="1026" cy="615" r="2" fill="#cfb53a" />
    </svg>
  );
}

function PromptBar() {
  return (
    <div className="flex items-center h-[18px] bg-white border-t border-[#e3e3ea] pl-1 pr-px">
      <Svg box="0 0 14 8" className="w-3.5 h-2"><path d="M0 0h14v8H0z" fill="#3d6db4" /><path d="M2 5h10" stroke="#dce8f8" strokeWidth="2" strokeDasharray="2 1" /></Svg>
      <span className="w-[87px] pl-[3px] text-[8px] text-[#3b65ad] whitespace-nowrap">Aufforderungsleiste</span>
      <p className="flex-1 min-w-0 h-4 border-l border-t border-[#9a9aa0] pl-px text-[9px] leading-[14px] text-[#222] whitespace-nowrap">
        Legen Sie den Symmetrieabstand fest, indem Sie klicken oder einen Wert eingeben. K=Punkt lokalisieren, dann (M) Mitten-, (E) End-, (C) Mittel-, (S) Silhouettenpunkt.
      </p>
      <div className="flex items-center gap-0.5 text-[#222] pl-1">
        <button className="flex font-['Liberation_Serif',serif] font-bold text-[11px] leading-3" aria-label="Schrift größer">A<Svg box="0 0 6 4" className="w-[3px] h-0.5"><path d="M0 4h6L3 0z" fill="#222" /></Svg></button>
        <button className="flex font-['Liberation_Serif',serif] font-bold text-[8px] leading-3" aria-label="Schrift kleiner">A<Svg box="0 0 6 4" className="w-[3px] h-0.5"><path d="M0 0h6L3 4z" fill="#222" /></Svg></button>
        <Svg box="0 0 8 8" className="w-2 h-2"><path d="M2 4l2-2 2 2M2 7l2-2 2 2" stroke="#222" /></Svg>
        <Svg box="0 0 8 8" className="w-2.5 h-2.5"><path d="M0 1h8M1 3h6" stroke="#222" /><path d="M1 4h6L4 7z" fill="#222" /></Svg>
        <Pin className="w-2.5 h-2.5" strokeWidth={3} />
        <X className="w-2.5 h-2.5" />
      </div>
    </div>
  );
}

function StatusBar() {
  return (
    <div className="flex items-center justify-end h-3.5 bg-[#27529b]">
      <input aria-label="Einen Befehl suchen" placeholder="Einen Befehl suchen" className="w-[99px] h-[13px] px-[3px] bg-white text-[8px] placeholder:text-[#b4b4b8] outline-none" />
      <div className="flex items-center gap-1 pl-px">
        <Svg><path d="M1 13c0-5 3-7 8-7V3l6 5-6 5V9c-4 0-6 1-8 4z" fill="#fff" /></Svg>
        <Svg><path d="M1 3h14v11H1z" fill="#9cc4ea" stroke="#dcebfa" /><circle cx="9" cy="8" r="3" fill="#e8f3fc" stroke="#2b5a9a" /></Svg>
        <Svg><circle cx="7" cy="6" r="4.500" fill="#a6ccec" stroke="#dcebfa" strokeWidth="2" /><path d="M10 9l5 6" stroke="#e3c290" strokeWidth="2.500" /></Svg>
        <Svg><path d="M1 2h14v12H1z" fill="#f2f7fd" /><path d="M3 4l3 3M13 4l-3 3M3 12l3-3M13 12l-3-3" stroke="#2b5a9a" strokeWidth="2" /></Svg>
        <Svg><path d="M1 2h14v9H1z" fill="#cfdff0" /><path d="M5 15c-2-6 1-8 4-7s4 3 2 7z" fill="#d8b692" /></Svg>
        <Svg><path d="M3 9c0-4 5-7 9-6l2 4-6 7-5-1z" fill="#3fbb4e" /><circle cx="8" cy="8" r="2.500" fill="#dff5e2" /></Svg>
        <Svg><path d="M8 1l2 5 5 2-4 2 1 4-5-3-5-2 5-2z" fill="#8fc2f0" stroke="#d8ebfa" /></Svg>
        <Svg><path d="M3 3l5-2h7v10l-4 4H3z" fill="#f2d765" /><path d="M2 5h9v9H2z" fill="#5fb540" stroke="#e9f5e2" /></Svg>
        <Svg><path d="M1 1h9v9H1z" fill="#3a5a87" stroke="#9ab" /><path d="M6 5h9v10H6z" fill="#eeb449" /></Svg>
      </div>
      <div className="flex items-center gap-1 pl-[3px]">
        <button aria-label="Verkleinern" className="w-[9px] h-[9px] rounded-full bg-[#e8eef8] flex items-center justify-center"><Minus className="w-[7px] h-[7px] text-[#27529b]" strokeWidth={4} /></button>
        <input
          type="range"
          aria-label="Zoom"
          defaultValue="30"
          className="appearance-none w-20 h-px bg-[#c4d3ec] [&::-webkit-slider-thumb]:appearance-none [&::-webkit-slider-thumb]:w-1.5 [&::-webkit-slider-thumb]:h-2.5 [&::-webkit-slider-thumb]:rounded-b-sm [&::-webkit-slider-thumb]:bg-[#d5e0f2] [&::-webkit-slider-thumb]:border [&::-webkit-slider-thumb]:border-white"
        />
        <button aria-label="Vergrößern" className="w-[9px] h-[9px] rounded-full bg-[#e8eef8] flex items-center justify-center text-[#27529b]"><Svg className="w-[7px] h-[7px]"><path d="M8 1v14M1 8h14" stroke="#27529b" strokeWidth="3" /></Svg></button>
      </div>
      <div className="flex items-center gap-2 pl-1.5">
        <span className="w-[9px] h-[9px] rounded-full bg-[#d81e1e] border border-[#f08a8a]" />
        <Svg className="w-2.5 h-3"><path d="M8 1l7 7h-4v6H5V8H1z" fill="#52c234" stroke="#2f8a1c" /></Svg>
      </div>
    </div>
  );
}

const APPS = [
  ["Explorer", <path key="a" d="M1 3h7l2 2h9v4H1z" fill="#d9a528" />, <path key="b" d="M1 6h18v12h-4v-5H6v5H1z" fill="#f6cf5b" />, <path key="c" d="M5 12h11v6h-3v-3H8v3H5z" fill="#3d93d0" />],
  ["Player", <path key="a" d="M2 3h13v14H2z" fill="#8ebce2" />, <path key="b" d="M5 3h13v14H5z" fill="#c5dced" stroke="#6f9cc4" />, <circle key="c" cx="10" cy="10" r="5" fill="#ee8328" />, <path key="d" d="M8.500 7l5 3-5 3z" fill="#fff" />],
  ["Chrome", <circle key="a" cx="10" cy="10" r="9" fill="#f2c430" />, <path key="b" d="M10 10L2 5.500A9 9 0 0 1 18.500 7z" fill="#da3b2e" />, <path key="c" d="M2 5.500A9 9 0 0 0 9 19l4-7-6-1z" fill="#33a352" />, <circle key="d" cx="10" cy="10" r="4.200" fill="#3d7ce8" stroke="#fff" strokeWidth="1.200" />],
  ["Stecker", <path key="a" d="M2 4l6-3 4 6-6 4z" fill="#8a7a72" />, <path key="b" d="M6 10l7-5 4 6 0 3 2 4-3 1-3-3-4-1z" fill="#35a136" />],
  ["Snipping Tool", <ellipse key="a" cx="9" cy="8" rx="7" ry="5" fill="#fff" stroke="#bfc0c6" />, <path key="b" d="M3 14L16 4M6 4l9 11" stroke="#ce4242" strokeWidth="1.300" />, <circle key="c" cx="4" cy="14" r="2" stroke="#ce4242" strokeWidth="1.300" />, <circle key="d" cx="14" cy="15" r="2.500" stroke="#3274b5" strokeWidth="1.300" />],
  ["Thunderbird", <circle key="a" cx="10" cy="10" r="9" fill="#245ca8" />, <path key="b" d="M3 9l9-1 3 5-5 5-6-3z" fill="#f2f5fa" />, <path key="c" d="M4 9l5 3 4-4" stroke="#96a9c8" />, <path key="d" d="M2 4c5-3 9-1 11 2l-6 1z" fill="#3f8ee0" />],
  ["Firefox", <circle key="a" cx="10" cy="11" r="8" fill="#f2632c" />, <path key="b" d="M13 1c4 4 6 8 4 12s-8 5-11 3c6 0 8-3 7-7z" fill="#fbc02d" />, <circle key="c" cx="10" cy="11" r="4" fill="#7742b4" />, <path key="d" d="M3 4l3 2 3 0-2 3-4 1z" fill="#f7913a" />],
  ["Solid Edge"],
  ["PowerPoint", <path key="a" d="M8 3h11v14H8z" fill="#fff" stroke="#cf4a2b" strokeWidth="1.500" />, <path key="b" d="M13 7h4M13 10h4M13 13h4" stroke="#cf4a2b" />, <path key="c" d="M1 3l11-2v18L1 17z" fill="#cf4a2b" />, <path key="d" d="M5 14V6h3c2 0 2 4 0 4H5" stroke="#fff" strokeWidth="1.600" />],
  ["OBS", <circle key="a" cx="10" cy="10" r="9" fill="#222126" />, <path key="b" d="M10 3c-4 2-3 6 0 7 4 0 6 2 4 6M10 10c0 4-4 5-7 2M10 10c1-4 4-5 7-2" stroke="#d5d5da" strokeWidth="1.500" />],
];

function Taskbar() {
  return (
    <footer className="flex items-center h-[27px] bg-[#ededf1] text-[#333]">
      <button aria-label="Start" className="w-[31px] flex justify-center">
        <Svg><path d="M1 3l6-1v5H1zM8 2l7-1v6H8zM1 8h6v6l-6-1zM8 8h7v7l-7-1z" fill="#111" /></Svg>
      </button>
      <label className="flex items-center gap-2 w-[243px] h-full bg-white border-x border-[#d5d5da] pl-2">
        <Search className="w-3 h-3 -scale-x-100 text-[#333]" />
        <input aria-label="Suchbegriff hier eingeben" placeholder="Suchbegriff hier eingeben" className="flex-1 font-['Noto_Sans',sans-serif] text-[10px] placeholder:text-[#55555a] outline-none" />
      </label>
      <div className="flex h-full">
        {APPS.map(([name, ...shapes]) => (
          <button key={name} aria-label={name} className={`w-[35px] flex items-center justify-center ${name === "Solid Edge" ? "bg-[#f9f9fb]" : ""}`}>
            {name === "Solid Edge" ? <SolidEdgeLogo className="w-[18px] h-[18px]" /> : <Svg box="0 0 20 20" className="w-4 h-4">{shapes}</Svg>}
          </button>
        ))}
      </div>
      <div className="ml-auto flex items-center gap-1.5 pr-[15px] text-[8px]">
        <ChevronUp className="w-2.5 h-2.5" />
        <Volume2 className="w-3 h-3" />
        <Wifi className="w-3 h-3 -rotate-45" />
        <span>DEU</span>
        <time className="text-center leading-3 w-11">16:42<br />29.03.2020</time>
        <MessageSquare className="w-3 h-3 ml-0.5" />
      </div>
    </footer>
  );
}

export default function App() {
  return (
    <div className="min-h-screen bg-black pl-[190px] pr-[190px] flex flex-col font-['Liberation_Sans',sans-serif]">
      <Header />
      <Ribbon />
      <main className="flex-1 flex bg-[#f4f2f7]">
        <aside className="w-[18px] flex flex-col gap-3 pl-px pt-1">
          <button className="h-[125px] w-3 flex flex-col items-center gap-0.5 font-[Lato,sans-serif] text-[9px] leading-3 text-[#3d5f9f]">
            <LibraryIcon />
            <span className="[writing-mode:vertical-rl] whitespace-nowrap">Formelement-Bibliothek</span>
          </button>
          <IconButton label="Galerie" className="w-3"><Gallery /></IconButton>
          <IconButton label="Teile" className="w-3"><Parts /></IconButton>
          <IconButton label="Wiedergabe" className="w-3"><Player /></IconButton>
          <IconButton label="Simulation" className="w-3"><Heat /></IconButton>
          <IconButton label="Ergebnisse" className="w-3"><HeatTable /></IconButton>
          <IconButton label="Beziehungen" className="w-3"><Chain /></IconButton>
          <IconButton label="Baugruppe" className="w-3"><Cubes /></IconButton>
        </aside>
        <div className="flex-1 min-w-0 flex flex-col">
          <DocTabs />
          <div className="relative flex-1 bg-[#fbfbfe]">
            <Model />
            <div className="relative">
              <CommandBar />
              <PathFinder />
            </div>
          </div>
          <PromptBar />
        </div>
        <aside className="w-[18px] flex flex-col items-end gap-3 pt-1">
          <button className="h-[111px] w-3 flex flex-col items-center gap-0.5 text-[9px] leading-3 text-[#3d5f9f]">
            <Help />
            <span className="[writing-mode:vertical-rl] whitespace-nowrap">Solid Edge lernen</span>
          </button>
          <IconButton label="YouTube"><YouTube /></IconButton>
          <IconButton label="Facebook"><Facebook /></IconButton>
          <IconButton label="Community"><Card /></IconButton>
          <IconButton label="Aufgaben"><Clipboard /></IconButton>
        </aside>
      </main>
      <StatusBar />
      <Taskbar />
    </div>
  );
}
